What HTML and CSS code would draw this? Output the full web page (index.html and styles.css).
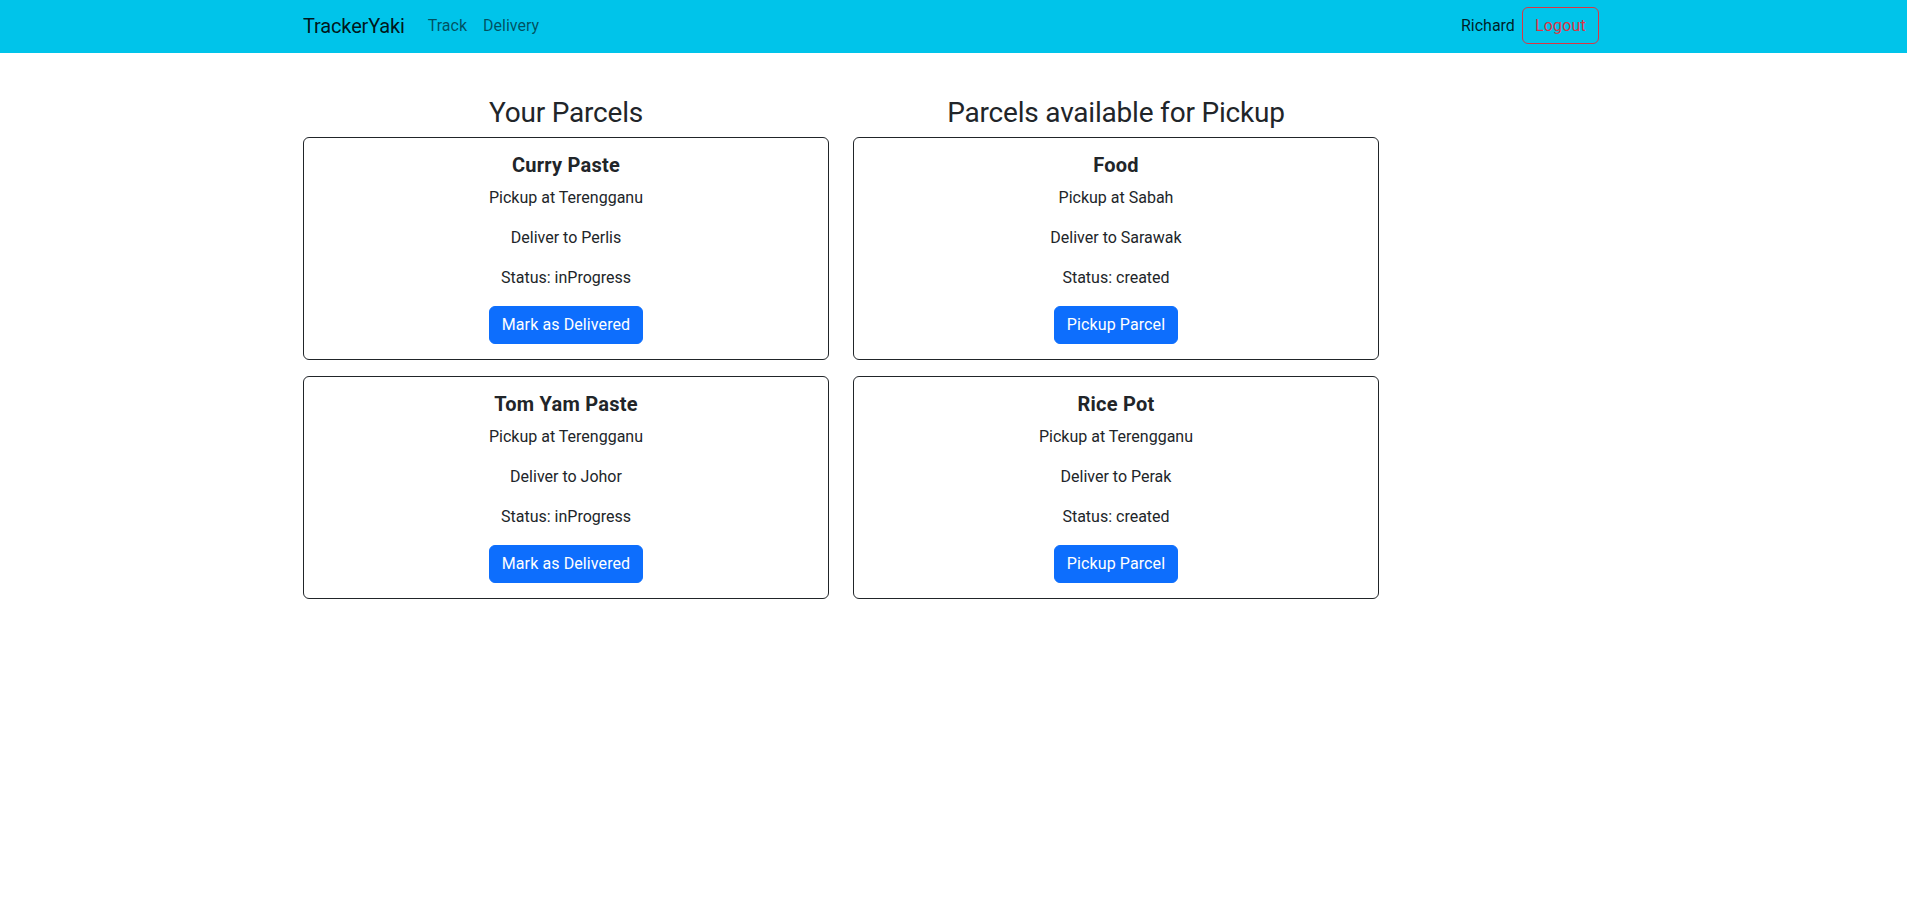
FILE: index.html
```html
<!DOCTYPE html>
<html lang="en">
<head>
<meta charset="utf-8">
<title>TrackerYaki</title>
<link rel="stylesheet" href="styles.css">
</head>
<body>
<nav class="navbar">
  <div class="container nav-inner">
    <div class="nav-left">
      <a class="brand" href="#">TrackerYaki</a>
      <a class="nav-link" href="#">Track</a>
      <a class="nav-link" href="#">Delivery</a>
    </div>
    <div class="nav-right">
      <span class="user">Richard</span>
      <button class="btn btn-outline-danger">Logout</button>
    </div>
  </div>
</nav>
<main class="container main">
  <div class="row">
    <section class="col">
      <h3 class="col-title">Your Parcels</h3>
      <div class="card">
        <h5 class="card-title">Curry Paste</h5>
        <p>Pickup at Terengganu</p>
        <p>Deliver to Perlis</p>
        <p>Status: inProgress</p>
        <button class="btn btn-primary">Mark as Delivered</button>
      </div>
      <div class="card">
        <h5 class="card-title">Tom Yam Paste</h5>
        <p>Pickup at Terengganu</p>
        <p>Deliver to Johor</p>
        <p>Status: inProgress</p>
        <button class="btn btn-primary">Mark as Delivered</button>
      </div>
    </section>
    <section class="col">
      <h3 class="col-title">Parcels available for Pickup</h3>
      <div class="card">
        <h5 class="card-title">Food</h5>
        <p>Pickup at Sabah</p>
        <p>Deliver to Sarawak</p>
        <p>Status: created</p>
        <button class="btn btn-primary">Pickup Parcel</button>
      </div>
      <div class="card">
        <h5 class="card-title">Rice Pot</h5>
        <p>Pickup at Terengganu</p>
        <p>Deliver to Perak</p>
        <p>Status: created</p>
        <button class="btn btn-primary">Pickup Parcel</button>
      </div>
    </section>
  </div>
</main>
</body>
</html>
```
FILE: styles.css
```css
* { box-sizing: border-box; }
html, body { margin: 0; }
body {
  font-family: Roboto, "Liberation Sans", sans-serif;
  font-size: 16px;
  line-height: 1.5;
  color: #212529;
  background: #fff;
}
.container {
  width: 1296px;
  margin-left: calc((100% - 1296px) / 2 - 2.5px);
}
.navbar {
  background: #00c4ea;
  height: 53px;
}
.nav-inner {
  height: 100%;
  display: flex;
  align-items: center;
  justify-content: space-between;
  padding-bottom: 2px;
}
.nav-left, .nav-right { display: flex; align-items: center; }
.brand {
  font-size: 20px;
  color: rgba(0,0,0,.9);
  text-decoration: none;
  margin-right: 15px;
  line-height: 30px;
  letter-spacing: -0.15px;
}
.nav-link {
  color: rgba(0,0,0,.6);
  text-decoration: none;
  padding: 8px;
}
.user {
  color: rgba(0,0,0,.85);
  padding-right: 7px;
}
.btn {
  font-family: inherit;
  font-size: 16px;
  line-height: 24px;
  padding: 6px 12px;
  border-radius: 6px;
  border: 1px solid transparent;
  cursor: pointer;
}
.btn-outline-danger {
  color: #dc3545;
  border-color: #dc3545;
  background: transparent;
  height: 37px;
  padding: 5px 12px;
  letter-spacing: 0.2px;
}
.btn-primary {
  color: #fff;
  background: #0d6efd;
  border-color: #0d6efd;
  letter-spacing: 0.1px;
  padding: 6px 12px;
}
.main { padding-top: 43px; }
.row {
  display: flex;
  gap: 24px;
}
.col { width: 526px; }
.col-title {
  font-size: 28px;
  font-weight: 400;
  line-height: 1.2;
  text-align: center;
  margin: 0 0 7px;
  letter-spacing: -0.2px;
}
.card {
  border: 1px solid #212529;
  border-radius: 6px;
  padding: 15px 16px 15px;
  text-align: center;
  margin-bottom: 16px;
}
.card-title {
  font-size: 20px;
  font-weight: 700;
  line-height: 1.2;
  margin: 0 0 9px;
  letter-spacing: 0.25px;
}
.card p { margin: 0 0 16px; }
```
